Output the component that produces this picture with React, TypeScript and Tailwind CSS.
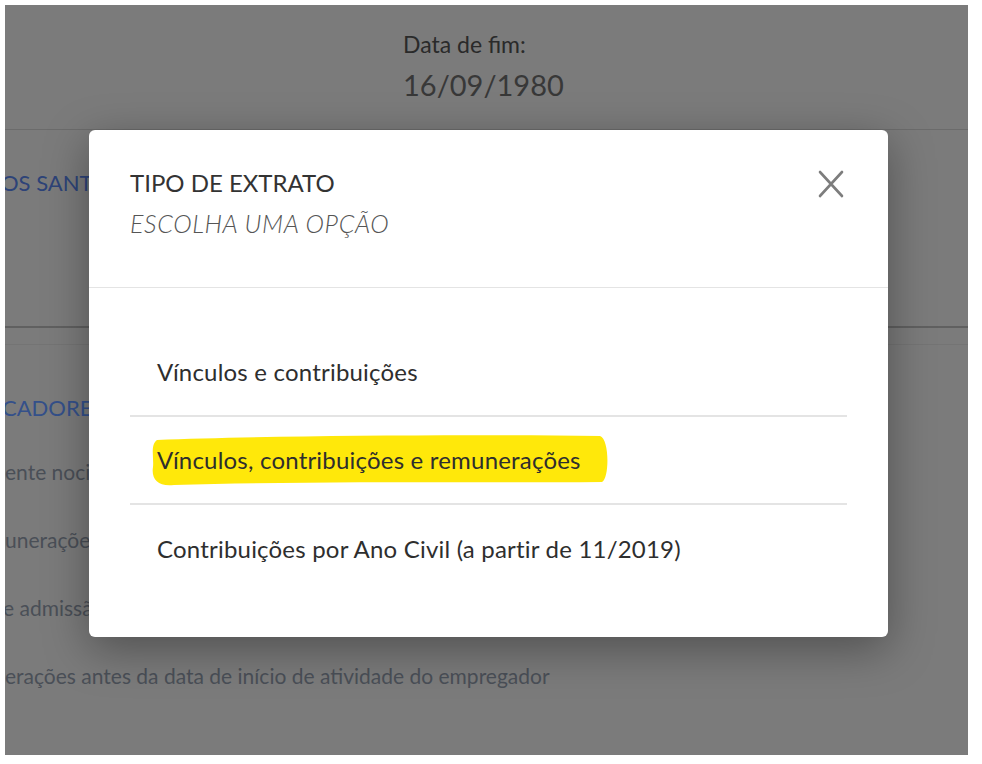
import * as React from "react"

const font = { fontFamily: "Lato, 'Open Sans', sans-serif" }

const options = [
  "Vínculos e contribuições",
  "Vínculos, contribuições e remunerações",
  "Contribuições por Ano Civil (a partir de 11/2019)",
]

const Highlight = () => (
  <svg
    className="absolute left-[18px] top-[16px] h-[54px] w-[462px]"
    viewBox="0 0 462 54"
    preserveAspectRatio="none"
  >
    <path
      d="M9 7 C 110 3, 300 1, 452 3 C 461 5, 462 44, 454 49 C 330 50, 160 48, 26 52 C 10 54, 3 46, 5 34 C 6 24, 2 12, 9 7 Z"
      fill="#ffe80a"
    />
  </svg>
)

const ExtractModal = () => (
  <div className="absolute left-[84px] top-[125px] h-[507px] w-[799px] rounded-md bg-white shadow-[0_12px_45px_rgba(0,0,0,0.35)]">
    {/* Header */}
    <div className="relative h-[158px] border-b border-[#e4e4e4] pl-[41px] pt-[38px]">
      <h3 className="text-[24px] leading-[30px] text-[#333]">TIPO DE EXTRATO</h3>
      <p className="mt-[10px] text-[25px] font-light italic leading-[30px] tracking-[0.6px] text-[#555]">
        ESCOLHA UMA OPÇÃO
      </p>
      <button className="absolute right-[44px] top-[40px] h-[28px] w-[26px]">
        <svg viewBox="0 0 26 28" className="h-full w-full">
          <path d="M2 2 L24 26 M24 2 L2 26" stroke="#7d7d7d" strokeWidth="2.6" strokeLinecap="round" />
        </svg>
      </button>
    </div>

    {/* Options */}
    <ul className="px-[41px] pt-[41px]">
      {options.map((option, i) => (
        <li
          key={option}
          className={`relative flex h-[88px] items-center pl-[27px] ${
            i < options.length - 1 ? "border-b-2 border-[#e4e4e4]" : ""
          }`}
        >
          {i === 1 && <Highlight />}
          <span className="relative text-[24px] tracking-[0.2px] text-[#2e2e2e]">{option}</span>
        </li>
      ))}
    </ul>
  </div>
)

export default function App() {
  return (
    <div className="h-[764px] w-[982px] bg-white pl-[5px] pt-[5px]" style={font}>
      <div className="relative h-[750px] w-[963px] overflow-hidden bg-[#7b7b7b]">
        {/* Page behind the modal */}
        <div className="h-[125px] border-b border-[#6b6b6b] pl-[398px] pt-[24px]">
          <p className="text-[23px] leading-[30px] text-[#2a2a2a]">Data de fim:</p>
          <p className="mt-[8px] text-[29px] leading-[36px] text-[#383838]">16/09/1980</p>
        </div>
        <div className="h-[198px] border-b-2 border-[#606060] pt-[36px]">
          <p className="-ml-[4px] text-[22px] text-[#2d4378]">OS SANTOS</p>
        </div>
        <div className="mt-[16px] h-px bg-[#747474]" />
        <div className="pt-[48px] text-[#4a4f57]">
          <p className="-ml-[3px] text-[22px] leading-[30px] text-[#34508a]">CADORES</p>
          <div className="mt-[34px] flex flex-col gap-[38px] text-[21px] leading-[30px]">
            <p>ente nocivo</p>
            <p>unerações</p>
            <p className="-ml-[2px]">e admissão</p>
            <p>erações antes da data de início de atividade do empregador</p>
          </div>
        </div>

        <ExtractModal />
      </div>
    </div>
  )
}
